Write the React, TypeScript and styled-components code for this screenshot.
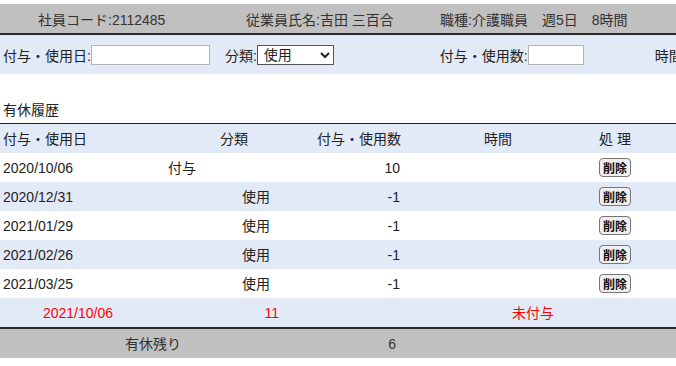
import styled, { createGlobalStyle } from "styled-components";

type Align = "left" | "center" | "right";

interface Row {
  date: string;
  kind: string;
  count: string;
}

const rows: Row[] = [
  { date: "2020/10/06", kind: "付与", count: "10" },
  { date: "2020/12/31", kind: "使用", count: "-1" },
  { date: "2021/01/29", kind: "使用", count: "-1" },
  { date: "2021/02/26", kind: "使用", count: "-1" },
  { date: "2021/03/25", kind: "使用", count: "-1" },
];

const GlobalStyle = createGlobalStyle`
  html, body {
    margin: 0;
    padding: 0;
    background: #fff;
    overflow: hidden;
  }
  body {
    font-family: "Liberation Sans", "Noto Sans CJK JP", sans-serif;
    font-size: 14px;
    color: #222;
  }
`;

const Page = styled.div`
  width: 760px;
  padding-top: 4px;
`;

const InfoBar = styled.div`
  display: grid;
  grid-template-columns: 208px 194px auto;
  align-items: center;
  height: 29px;
  padding-left: 38px;
  background: #c0c0c0;
  border-bottom: 2px solid #2a2a2a;
  color: #333;
  white-space: nowrap;
`;

const FormBar = styled.div`
  display: flex;
  align-items: center;
  height: 39px;
  padding-left: 3px;
  background: #e2eaf7;
  white-space: nowrap;
`;

const Field = styled.label<{ $gap: number }>`
  display: flex;
  align-items: center;
  margin-right: ${(p) => p.$gap}px;
`;

const TextInput = styled.input<{ $w: number }>`
  box-sizing: border-box;
  width: ${(p) => p.$w}px;
  height: 20px;
  margin: 0;
  border: 1px solid #b5b5b5;
  background: #fff;
  font: inherit;
`;

const Select = styled.select`
  box-sizing: border-box;
  width: 77px;
  height: 20px;
  margin: 0;
  padding: 0 0 0 2px;
  border: 1px solid #555;
  border-radius: 0;
  background: #fff;
  font: inherit;
  color: #222;
`;

const Title = styled.div`
  margin: 26px 0 3px 3px;
  height: 20px;
  line-height: 20px;
`;

const Table = styled.div`
  border-top: 1px solid #222;
`;

const TableRow = styled.div<{ $shade: boolean; $red?: boolean }>`
  display: grid;
  grid-template-columns: 156px 156px 94px 184px 50px 1fr;
  height: 29px;
  align-items: center;
  background: ${(p) => (p.$shade ? "#e2eaf7" : "#fff")};
  color: ${(p) => (p.$red ? "#ff0000" : "#222")};
`;

const Cell = styled.div<{ $align?: Align; $pl?: number; $pr?: number }>`
  text-align: ${(p) => p.$align ?? "left"};
  padding-left: ${(p) => p.$pl ?? 0}px;
  padding-right: ${(p) => p.$pr ?? 0}px;
  white-space: nowrap;
  line-height: 18px;
`;

const DeleteButton = styled.button`
  box-sizing: border-box;
  height: 19px;
  padding: 0 3px;
  border: 1px solid #767676;
  border-radius: 4px;
  background: #efefef;
  font-family: "Noto Sans CJK JP", sans-serif;
  font-size: 12px;
  font-weight: 700;
  line-height: 16px;
  color: #111;
`;

const Footer = styled.div`
  display: grid;
  grid-template-columns: 306px 100px 1fr;
  align-items: center;
  height: 29px;
  border-top: 2px solid #2a2a2a;
  background: #c0c0c0;
  color: #333;
`;

export default function App() {
  return (
    <Page>
      <GlobalStyle />
      <InfoBar>
        <span>社員コード:2112485</span>
        <span>従業員氏名:吉田 三百合</span>
        <span>職種:介護職員　週5日　8時間</span>
      </InfoBar>

      <FormBar>
        <Field $gap={15}>
          付与・使用日:<TextInput $w={119} />
        </Field>
        <Field $gap={106}>
          分類:
          <Select defaultValue="使用">
            <option>付与</option>
            <option>使用</option>
          </Select>
        </Field>
        <Field $gap={71}>
          付与・使用数:<TextInput $w={56} />
        </Field>
        <Field $gap={0}>
          時間:<TextInput $w={56} />
        </Field>
      </FormBar>

      <Title>有休履歴</Title>

      <Table>
        <TableRow $shade>
          <Cell $pl={3}>付与・使用日</Cell>
          <Cell $align="center">分類</Cell>
          <Cell $align="center">付与・使用数</Cell>
          <Cell $align="center">時間</Cell>
          <Cell $align="center">処 理</Cell>
          <Cell />
        </TableRow>
        {rows.map((r, i) => (
          <TableRow key={r.date} $shade={i % 2 === 1}>
            <Cell $pl={3}>{r.date}</Cell>
            {r.kind === "付与" ? (
              <Cell $pl={12}>{r.kind}</Cell>
            ) : (
              <Cell $align="right" $pr={42}>
                {r.kind}
              </Cell>
            )}
            <Cell $align="right" $pr={6}>
              {r.count}
            </Cell>
            <Cell />
            <Cell $align="center">
              <DeleteButton>削除</DeleteButton>
            </Cell>
            <Cell />
          </TableRow>
        ))}
        <TableRow $shade $red>
          <Cell $align="center">2021/10/06</Cell>
          <Cell $align="right" $pr={33}>
            11
          </Cell>
          <Cell />
          <Cell $pl={106}>未付与</Cell>
          <Cell />
          <Cell />
        </TableRow>
      </Table>

      <Footer>
        <Cell $align="center">有休残り</Cell>
        <Cell $align="right" $pr={10}>
          6
        </Cell>
        <Cell />
      </Footer>
    </Page>
  );
}
